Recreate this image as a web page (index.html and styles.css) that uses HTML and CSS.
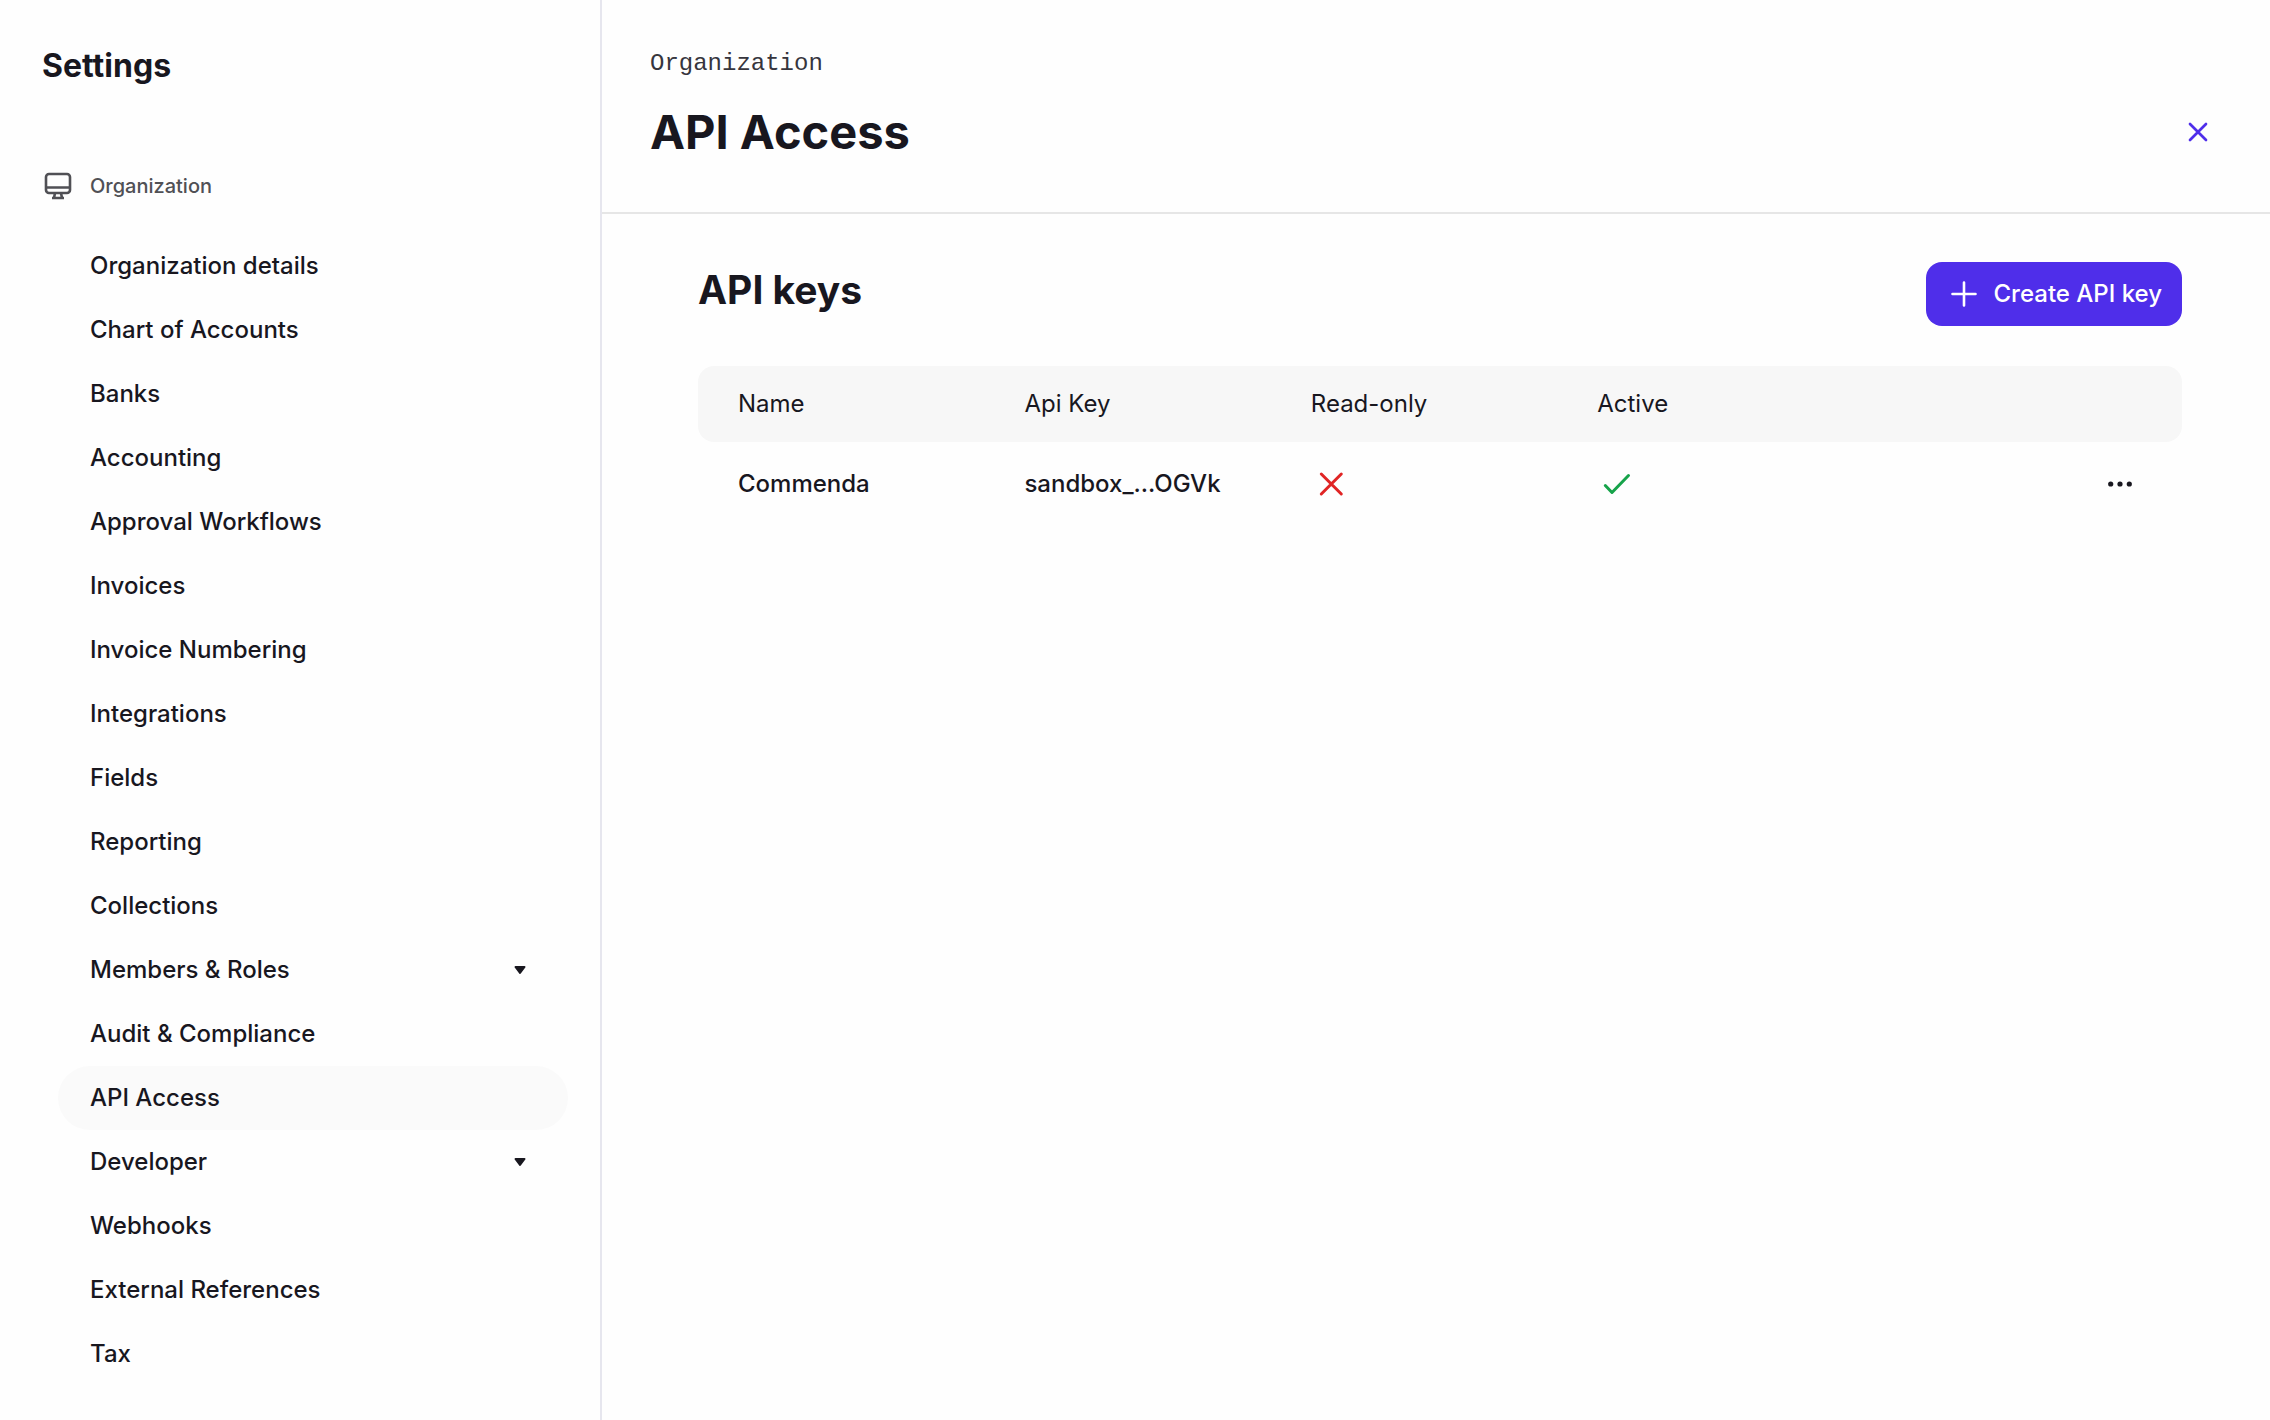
FILE: index.html
```html
<!DOCTYPE html>
<html lang="en">
<head>
    <meta charset="UTF-8">
    <meta name="viewport" content="width=device-width, initial-scale=1.0">
    <title>API Access - Settings</title>
    <link rel="stylesheet" href="styles.css">
</head>
<body>
    <aside class="sidebar">
        <h2 class="sidebar-title">Settings</h2>

        <div class="group-title">
            <svg class="group-icon" viewBox="0 0 32 32" fill="none" stroke="currentColor" stroke-width="2.6" stroke-linejoin="round">
                <rect x="4" y="4" width="24" height="19" rx="3"/>
                <path d="M4 17.500h24M13 23l-1 5M19 23l1 5M10 28h12"/>
            </svg>
            <span>Organization</span>
        </div>

        <nav class="nav">
            <a href="#" class="nav-item">Organization details</a>
            <a href="#" class="nav-item">Chart of Accounts</a>
            <a href="#" class="nav-item">Banks</a>
            <a href="#" class="nav-item">Accounting</a>
            <a href="#" class="nav-item">Approval Workflows</a>
            <a href="#" class="nav-item">Invoices</a>
            <a href="#" class="nav-item">Invoice Numbering</a>
            <a href="#" class="nav-item">Integrations</a>
            <a href="#" class="nav-item">Fields</a>
            <a href="#" class="nav-item">Reporting</a>
            <a href="#" class="nav-item">Collections</a>
            <button type="button" class="nav-item" aria-expanded="false">
                Members &amp; Roles
                <svg class="caret" viewBox="0 0 12 10"><path d="M1.500 2h9L6 8z" fill="currentColor" stroke="currentColor" stroke-width="2" stroke-linejoin="round"/></svg>
            </button>
            <a href="#" class="nav-item">Audit &amp; Compliance</a>
            <a href="#" class="nav-item active" aria-current="page">API Access</a>
            <button type="button" class="nav-item" aria-expanded="false">
                Developer
                <svg class="caret" viewBox="0 0 12 10"><path d="M1.500 2h9L6 8z" fill="currentColor" stroke="currentColor" stroke-width="2" stroke-linejoin="round"/></svg>
            </button>
            <a href="#" class="nav-item">Webhooks</a>
            <a href="#" class="nav-item">External References</a>
            <a href="#" class="nav-item">Tax</a>
        </nav>
    </aside>

    <main class="main">
        <header class="page-header">
            <div class="breadcrumb">Organization</div>
            <div class="title-row">
                <h1>API Access</h1>
                <button type="button" class="icon-btn close-btn" aria-label="Close">
                    <svg viewBox="0 0 24 24" fill="none" stroke="currentColor" stroke-width="2.7" stroke-linecap="round"><path d="M4 4l16 16M20 4L4 20"/></svg>
                </button>
            </div>
        </header>

        <section class="content">
            <div class="section-head">
                <h2>API keys</h2>
                <button type="button" class="create-btn">
                    <svg viewBox="0 0 28 28" fill="none" stroke="currentColor" stroke-width="2.6" stroke-linecap="round"><path d="M14 2.500v23M2.500 14h23"/></svg>
                    Create API key
                </button>
            </div>

            <table class="keys">
                <thead>
                    <tr>
                        <th>Name</th>
                        <th>Api Key</th>
                        <th>Read-only</th>
                        <th>Active</th>
                        <th class="actions"></th>
                    </tr>
                </thead>
                <tbody>
                    <tr>
                        <td>Commenda</td>
                        <td>sandbox_...OGVk</td>
                        <td>
                            <svg class="status no" viewBox="0 0 40 32" role="img" aria-label="No"><path d="M10.300 6l20 20M30.300 6l-20 20"/></svg>
                        </td>
                        <td>
                            <svg class="status yes" viewBox="0 0 40 32" role="img" aria-label="Yes"><path d="M8.300 17.500l6.700 7L31.500 7.500"/></svg>
                        </td>
                        <td class="actions">
                            <button type="button" class="icon-btn" aria-label="More">
                                <svg viewBox="0 0 24 24" fill="currentColor"><circle cx="2.700" cy="12" r="2.600"/><circle cx="12" cy="12" r="2.600"/><circle cx="21.300" cy="12" r="2.600"/></svg>
                            </button>
                        </td>
                    </tr>
                </tbody>
            </table>
        </section>
    </main>
</body>
</html>
```

FILE: styles.css
```css
* {
    margin: 0;
    padding: 0;
    box-sizing: border-box;
}

body {
    display: flex;
    min-height: 100vh;
    background-color: #fefefe;
    color: #18171f;
    font-family: Inter, "Liberation Sans", sans-serif;
    font-size: 24px;
    line-height: 32px;
}

button {
    border: none;
    background: none;
    color: inherit;
    font: inherit;
    cursor: pointer;
}

svg {
    display: block;
    flex-shrink: 0;
}

.sidebar {
    width: 602px;
    flex-shrink: 0;
    border-right: 2px solid #e6e6ee;
    padding: 46px 32px 32px 42px;
}

.sidebar-title {
    font-size: 32px;
    line-height: 40px;
    font-weight: 700;
}

.group-title {
    display: flex;
    align-items: center;
    gap: 16px;
    margin-top: 84px;
    font-size: 20px;
    font-weight: 500;
    color: #505055;
}

.group-icon {
    width: 32px;
    height: 32px;
}

.nav {
    margin-top: 32px;
    margin-left: 16px;
}

.nav-item {
    display: flex;
    align-items: center;
    justify-content: space-between;
    width: 100%;
    height: 64px;
    padding: 0 42px 0 32px;
    border-radius: 32px;
    color: inherit;
    font-weight: 500;
    text-decoration: none;
}

.nav-item.active {
    background-color: #fafafa;
}

.caret {
    width: 12px;
    height: 10px;
}

.main {
    flex: 1;
    min-width: 0;
}

.page-header {
    padding: 48px 48px;
    border-bottom: 2px solid #e6e6e6;
}

.breadcrumb {
    font-family: "Liberation Mono", monospace;
    color: #36353d;
}

.title-row {
    display: flex;
    align-items: center;
    justify-content: space-between;
    margin-top: 20px;
}

h1 {
    font-size: 47px;
    line-height: 64px;
    font-weight: 700;
}

.icon-btn {
    padding: 12px;
}

.icon-btn svg {
    width: 24px;
    height: 24px;
}

.close-btn {
    color: #4f2eea;
}

.content {
    padding: 48px 88px 48px 96px;
}

.section-head {
    display: flex;
    justify-content: space-between;
    align-items: flex-start;
}

.section-head h2 {
    font-size: 39px;
    line-height: 56px;
    font-weight: 700;
}

.create-btn {
    display: flex;
    align-items: center;
    gap: 16px;
    height: 64px;
    padding: 0 20px 0 24px;
    border-radius: 16px;
    background-color: #4f2eea;
    color: #fff;
    font-weight: 500;
}

.create-btn svg {
    width: 28px;
    height: 28px;
}

.keys {
    width: 100%;
    margin-top: 40px;
    border-collapse: separate;
    border-spacing: 0;
    table-layout: fixed;
}

.keys th {
    width: 19.3%;
    height: 76px;
    padding: 0 0 0 40px;
    background-color: #f7f7f7;
    font-weight: 400;
    text-align: left;
}

.keys th:first-child {
    border-radius: 16px 0 0 16px;
}

.keys th:last-child {
    width: auto;
    border-radius: 0 16px 16px 0;
}

.keys td {
    height: 84px;
    padding-left: 40px;
    font-weight: 500;
}

.keys .actions {
    padding-right: 38px;
}

.actions .icon-btn {
    display: block;
    margin-left: auto;
}

.status {
    width: 40px;
    height: 32px;
    fill: none;
    stroke-width: 3;
    stroke-linecap: round;
    stroke-linejoin: round;
}

.status.no {
    stroke: #e02424;
}

.status.yes {
    stroke: #16a34a;
}
```
